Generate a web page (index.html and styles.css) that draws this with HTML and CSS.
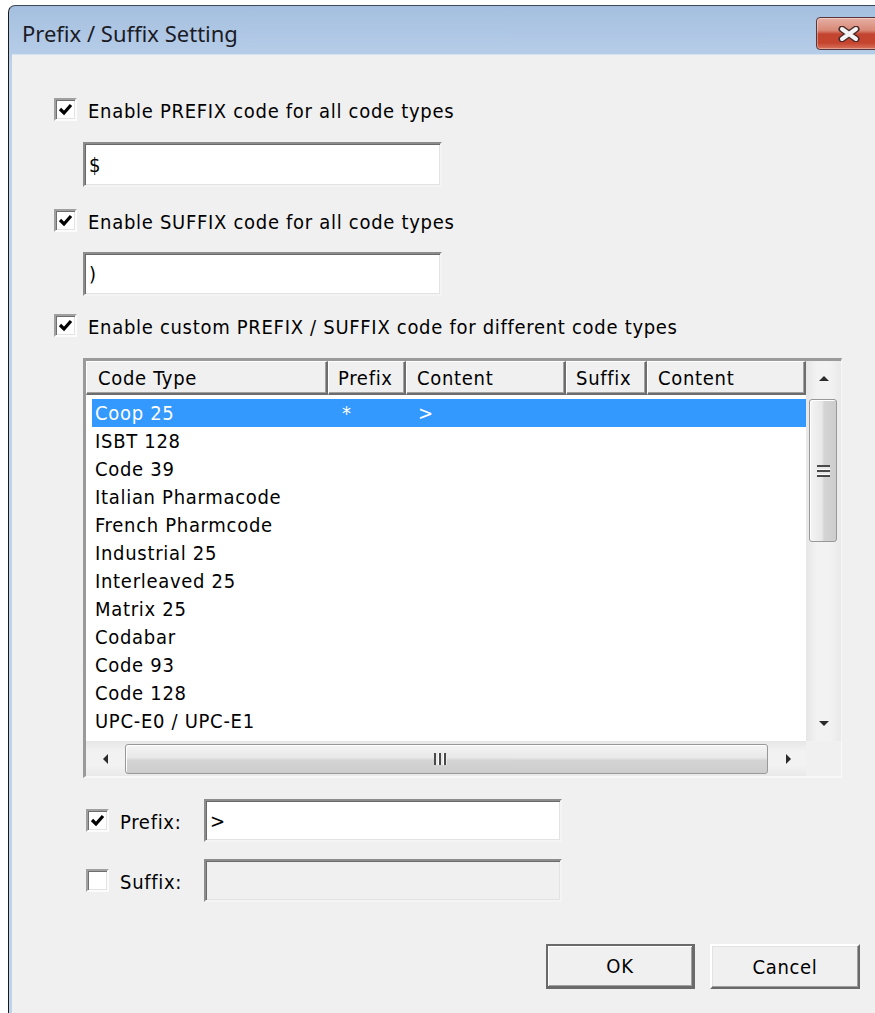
FILE: index.html
```html
<!DOCTYPE html>
<html lang="en">
<head>
<meta charset="utf-8">
<title>Prefix / Suffix Setting</title>
<link rel="stylesheet" href="styles.css">
</head>
<body>
<div class="window">
  <div class="titlebar">
    <span class="title">Prefix / Suffix Setting</span>
    <button class="close" aria-label="Close">
      <svg width="24" height="16" viewBox="0 0 24 16">
        <path d="M5 3 L19 13 M19 3 L5 13" stroke="#4a2a2a" stroke-width="7" stroke-linecap="round"/>
        <path d="M5 3 L19 13 M19 3 L5 13" stroke="#f4f4f4" stroke-width="4" stroke-linecap="round"/>
      </svg>
    </button>
  </div>

  <div class="client">
    <div class="opt opt-first">
      <span class="cb"><svg viewBox="0 0 19 19"><path d="M4 9 L8 13 L15 5" fill="none" stroke="#000" stroke-width="3.2"/></svg></span>
      <span>Enable PREFIX code for all code types</span>
    </div>
    <div class="edit edit-wide">$</div>

    <div class="opt opt-second">
      <span class="cb"><svg viewBox="0 0 19 19"><path d="M4 9 L8 13 L15 5" fill="none" stroke="#000" stroke-width="3.2"/></svg></span>
      <span>Enable SUFFIX code for all code types</span>
    </div>
    <div class="edit edit-wide edit-second">)</div>

    <div class="opt opt-third">
      <span class="cb"><svg viewBox="0 0 19 19"><path d="M4 9 L8 13 L15 5" fill="none" stroke="#000" stroke-width="3.2"/></svg></span>
      <span>Enable custom PREFIX / SUFFIX code for different code types</span>
    </div>

    <div class="list">
      <div class="list-view">
        <div class="header">
          <div class="hcell w-type">Code Type</div>
          <div class="hcell w-pre">Prefix</div>
          <div class="hcell w-pc">Content</div>
          <div class="hcell w-suf">Suffix</div>
          <div class="hcell w-sc">Content</div>
        </div>
        <div class="rows">
          <div class="row sel"><span class="c-type">Coop 25</span><span class="c-pre">*</span><span class="c-pc">&gt;</span><span class="c-suf"></span><span class="c-sc"></span></div>
          <div class="row"><span class="c-type">ISBT 128</span></div>
          <div class="row"><span class="c-type">Code 39</span></div>
          <div class="row"><span class="c-type">Italian Pharmacode</span></div>
          <div class="row"><span class="c-type">French Pharmcode</span></div>
          <div class="row"><span class="c-type">Industrial 25</span></div>
          <div class="row"><span class="c-type">Interleaved 25</span></div>
          <div class="row"><span class="c-type">Matrix 25</span></div>
          <div class="row"><span class="c-type">Codabar</span></div>
          <div class="row"><span class="c-type">Code 93</span></div>
          <div class="row"><span class="c-type">Code 128</span></div>
          <div class="row"><span class="c-type">UPC-E0 / UPC-E1</span></div>
          <div class="row"><span class="c-type">UPC-A with addon</span></div>
        </div>
      </div>

      <div class="vscroll">
        <div class="sb-btn"><span class="arr arr-up"></span></div>
        <div class="v-track">
          <div class="v-thumb"><span class="grip-h"></span></div>
        </div>
        <div class="sb-btn"><span class="arr arr-down"></span></div>
      </div>

      <div class="hscroll">
        <div class="sb-btn-h"><span class="arr arr-left"></span></div>
        <div class="h-thumb"><span class="grip-v"></span></div>
        <div class="sb-btn-h"><span class="arr arr-right"></span></div>
      </div>
      <div class="corner"></div>
    </div>

    <div class="field field-prefix">
      <span class="cb"><svg viewBox="0 0 19 19"><path d="M4 9 L8 13 L15 5" fill="none" stroke="#000" stroke-width="3.2"/></svg></span>
      <span class="field-label">Prefix:</span>
      <div class="edit edit-field">&gt;</div>
    </div>
    <div class="field field-suffix">
      <span class="cb"></span>
      <span class="field-label">Suffix:</span>
      <div class="edit edit-field disabled"></div>
    </div>

    <div class="buttons">
      <button class="btn btn-default">OK</button>
      <button class="btn">Cancel</button>
    </div>
  </div>
</div>
</body>
</html>
```

FILE: styles.css
```css
html, body {
  margin: 0;
  padding: 0;
  background: #ffffff;
  overflow: hidden;
}

body {
  font-family: "DejaVu Sans Condensed", "DejaVu Sans", sans-serif;
  font-size: 20px;
  letter-spacing: 0.7px;
  color: #000;
}

/* Window frame */
.window {
  margin: 5px 0 0 8px;
  width: 900px;
  height: 1020px;
  box-sizing: border-box;
  border-top: 1px solid #3c4a5a;
  border-left: 1px solid #1a1a1a;
  border-top-left-radius: 7px;
  background: linear-gradient(#a4bfdf 0px, #b6cde8 48px, #bcd3eb 60px, #bcd3eb 100%);
  display: flex;
  flex-direction: column;
}

.titlebar {
  height: 48px;
  flex: none;
  display: flex;
  align-items: center;
  padding-left: 13px;
}

.title {
  font-family: "Noto Sans", "Open Sans", sans-serif;
  font-size: 22px;
  color: #1b1b26;
  letter-spacing: 0;
  margin-top: 6px;
}

.close {
  margin-left: auto;
  margin-right: 26px;
  margin-top: 7px;
  width: 66px;
  height: 33px;
  padding: 0;
  border: 1px solid #5a3436;
  border-radius: 4px;
  background: linear-gradient(#e6b0a5 0%, #d88876 40%, #c24430 52%, #c5442e 80%, #d8735c 100%);
  box-shadow: inset 0 0 0 1px rgba(255, 255, 255, 0.35);
  display: flex;
  align-items: center;
  justify-content: center;
}

.close svg {
  display: block;
}

/* Client area */
.client {
  flex: 1;
  margin: 0 3px;
  border-top: 1px solid #d6e3f1;
  background: #f0f0f0;
  display: flex;
  flex-direction: column;
  align-items: flex-start;
  padding-left: 42px;
}

/* Check boxes */
.cb {
  width: 23px;
  height: 23px;
  flex: none;
  box-sizing: border-box;
  background: #fff;
  border: 2px solid;
  border-color: #a0a0a0 #fcfcfc #fcfcfc #a0a0a0;
  box-shadow: inset 1px 1px 0 #6f6f6f, inset -1px -1px 0 #e3e3e3;
  display: flex;
}

.cb svg {
  width: 19px;
  height: 19px;
}

.opt {
  display: flex;
  align-items: center;
  gap: 11px;
  height: 23px;
}

.opt span:last-child {
  padding-top: 2px;
}

.opt-first { margin-top: 43px; }
.opt-second { margin-top: 22px; }
.opt-third { margin-top: 18px; }

/* Edit boxes */
.edit {
  box-sizing: border-box;
  background: #fff;
  border: 2px solid;
  border-color: #8c8c8c #f4f4f4 #f4f4f4 #8c8c8c;
  box-shadow: inset 1px 1px 0 #6a6a6a, inset -1px -1px 0 #e3e3e3;
  padding: 0 0 0 4px;
  display: flex;
  align-items: center;
  line-height: 1;
}

.edit-wide {
  width: 359px;
  height: 45px;
  margin-top: 21px;
  margin-left: 29px;
}

.edit-second {
  height: 44px;
  margin-top: 20px;
}

.edit-field {
  width: 358px;
  height: 43px;
  margin-left: auto;
}

.edit.disabled {
  background: #f0f0f0;
}

/* List view */
.list {
  margin-top: 21px;
  margin-left: 29px;
  display: grid;
  grid-template-columns: 720px 35px;
  grid-template-rows: 380px 35px;
  border-style: solid;
  border-width: 3px 1px 2px 3px;
  border-color: #9a9a9a #f8f8f8 #f8f8f8 #9a9a9a;
  background: #fff;
}

.list-view {
  overflow: hidden;
  background: #fff;
}

.header {
  display: flex;
  height: 34px;
  background: #f0f0f0;
}

.hcell {
  box-sizing: border-box;
  height: 34px;
  border-style: solid;
  border-width: 1px 2px 2px 1px;
  border-color: #ffffff #6d6d6d #6d6d6d #ffffff;
  box-shadow: inset -1px -1px 0 #a0a0a0;
  padding-left: 10px;
  display: flex;
  align-items: center;
  white-space: nowrap;
  overflow: hidden;
}

.w-type { width: 242px; padding-left: 11px; }
.w-pre { width: 78px; padding-left: 9px; }
.w-pc { width: 160px; }
.w-suf { width: 81px; padding-left: 9px; }
.w-sc { width: 159px; }

.rows {
  padding-top: 4px;
}

.row {
  display: flex;
  height: 28px;
  align-items: center;
  margin-left: 6px;
  white-space: nowrap;
}

.row.sel {
  background: #3399ff;
  color: #fff;
}

.c-type { width: 236px; padding-left: 3px; box-sizing: border-box; }
.c-pre { width: 78px; padding-left: 14px; box-sizing: border-box; }
.c-pc { width: 160px; padding-left: 12px; box-sizing: border-box; }
.c-suf { width: 81px; }
.c-sc { width: 159px; }

/* Scroll bars */
.vscroll {
  display: flex;
  flex-direction: column;
  background: linear-gradient(90deg, #e6e6e6, #f2f2f2 30%, #f2f2f2 70%, #e9e9e9);
}

.sb-btn {
  height: 36px;
  flex: none;
  display: flex;
  align-items: center;
  justify-content: center;
}

.v-track {
  flex: 1;
  padding: 2px 4px 0 3px;
}

.v-thumb {
  height: 143px;
  box-sizing: border-box;
  border: 1px solid #989898;
  border-radius: 3px;
  background: linear-gradient(90deg, #f4f4f4 0%, #e8e8e8 45%, #d4d4d4 55%, #cdcdcd 100%);
  box-shadow: inset 1px 1px 0 #fff;
  display: flex;
  align-items: center;
  justify-content: center;
}

.grip-h {
  width: 13px;
  height: 12px;
  background: repeating-linear-gradient(#4a4a4a 0 2px, #e8e8e8 2px 4px, #ffffff 4px 5px);
}

.hscroll {
  display: flex;
  align-items: stretch;
  background: linear-gradient(#e6e6e6, #f2f2f2 30%, #f2f2f2 70%, #e9e9e9);
}

.sb-btn-h {
  width: 36px;
  flex: none;
  display: flex;
  align-items: center;
  justify-content: center;
}

.sb-btn-h:first-child {
  width: 38px;
}

.h-thumb {
  flex: 1;
  margin: 3px 2px 2px 1px;
  box-sizing: border-box;
  border: 1px solid #989898;
  border-radius: 3px;
  background: linear-gradient(#f4f4f4 0%, #e8e8e8 45%, #d4d4d4 55%, #cdcdcd 100%);
  box-shadow: inset 1px 1px 0 #fff;
  display: flex;
  align-items: center;
  padding-left: 308px;
}

.grip-v {
  width: 13px;
  height: 12px;
  background: repeating-linear-gradient(90deg, #4a4a4a 0 2px, #e8e8e8 2px 4px, #ffffff 4px 5px);
}

.corner {
  background: #f0f0f0;
}

.arr {
  width: 0;
  height: 0;
  border-style: solid;
  border-color: transparent;
}

.arr-up {
  border-width: 0 5px 5px 5px;
  border-bottom-color: #2b2b2b;
  margin-top: -2px;
}

.arr-down {
  border-width: 5px 5px 0 5px;
  border-top-color: #2b2b2b;
}

.arr-left {
  border-width: 5px 5px 5px 0;
  border-right-color: #2b2b2b;
}

.arr-right {
  border-width: 5px 0 5px 5px;
  border-left-color: #2b2b2b;
}

/* Prefix / suffix fields */
.field {
  display: flex;
  align-items: center;
  width: 476px;
  margin-left: 32px;
}

.field-label {
  margin-left: 11px;
  padding-top: 2px;
}

.field-prefix {
  margin-top: 21px;
}

.field-suffix {
  margin-top: 17px;
}

/* Dialog buttons */
.buttons {
  display: flex;
  gap: 15px;
  margin-top: 42px;
  margin-left: 492px;
}

.btn {
  font-family: inherit;
  font-size: 20px;
  letter-spacing: 0.7px;
  color: #000;
  width: 150px;
  height: 45px;
  padding: 0;
  box-sizing: border-box;
  background: #f0f0f0;
  border: 2px solid;
  border-color: #ffffff #696969 #696969 #ffffff;
  box-shadow: inset -1px -1px 0 #a0a0a0, inset 1px 1px 0 #e3e3e3;
}

.btn-default {
  width: 149px;
  border: 2px solid #6a6a6a;
  border-bottom-width: 3px;
  border-right-width: 3px;
  box-shadow: inset 1px 1px 0 #ffffff, inset -1px -1px 0 #a0a0a0;
}
```
